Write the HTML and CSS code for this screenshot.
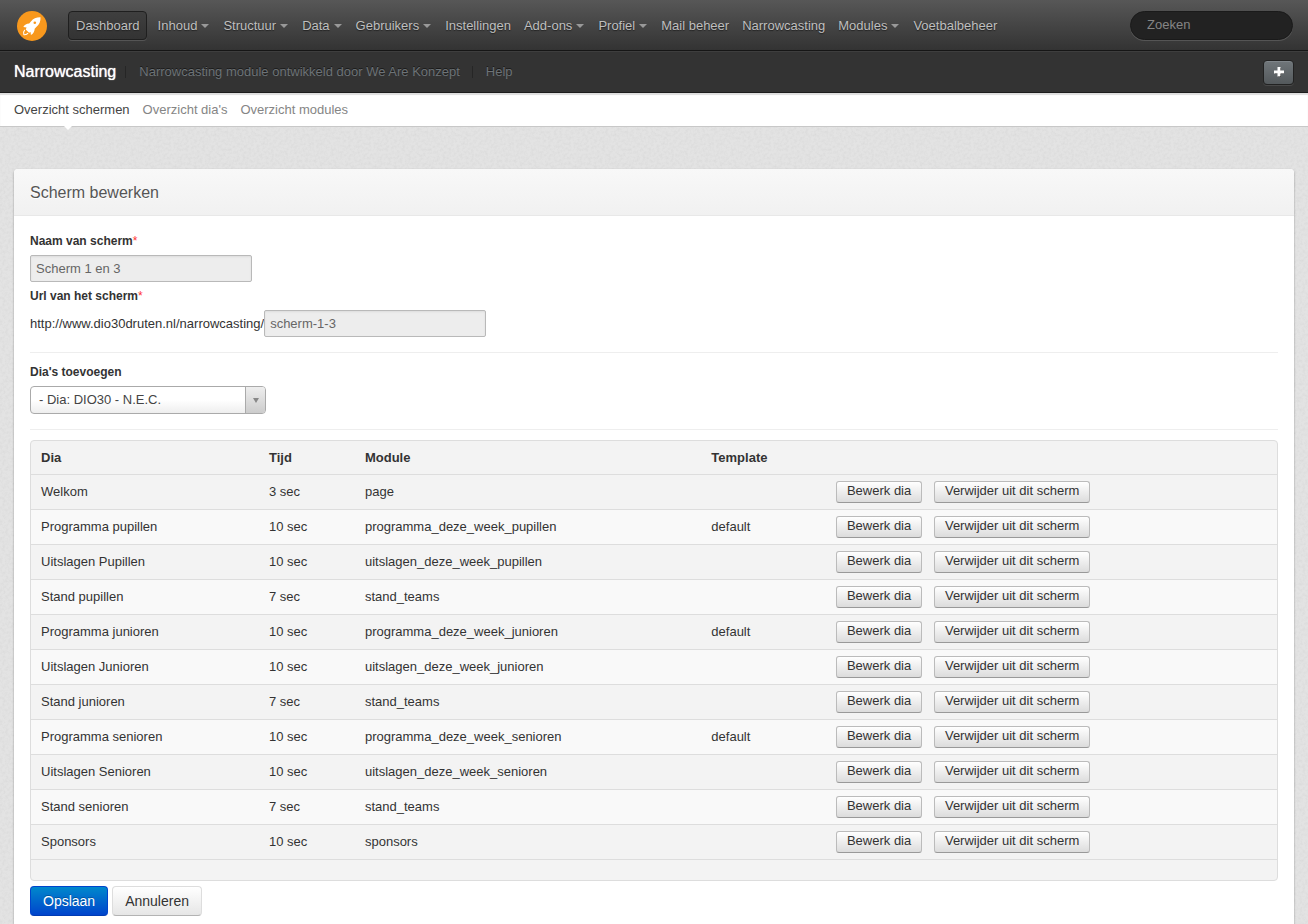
FILE: index.html
```html
<!DOCTYPE html>
<html lang="nl">
<head>
    <meta charset="UTF-8">
    <meta name="viewport" content="width=device-width, initial-scale=1.0">
    <title>Narrowcasting - Scherm bewerken</title>
    <link rel="stylesheet" href="styles.css">
</head>
<body>
    <header class="topbar">
        <a class="logo" href="#" aria-label="Home">
            <svg width="30" height="30" viewBox="0 0 30 30">
                <circle cx="15" cy="15" r="15" fill="#f8981d"/>
                <path fill="#fff" d="M23.500 6.300c-4-.1-7.200 1.300-9.600 4.100l-1.700 2c-2.600.1-4.700 1.300-5.900 3.500l3.300.5-.9 2.100 3.400 3.300 1.500-.7.300 3c2.400-1.500 3.600-3.700 3.800-6.400l1.600-1.600c3.100-2.700 4.500-5.800 4.200-9.800z"/>
                <circle cx="17.800" cy="11.700" r="1.300" fill="#f8981d"/>
                <path fill="none" stroke="#fff" stroke-width="1.100" d="M7.800 18.800c-1.300 1.400-1.600 3-.9 4.800 1.700.3 3.100-.2 4.200-1.400"/>
            </svg>
        </a>
        <nav class="menu">
            <a class="active" href="#">Dashboard</a>
            <a class="dropdown" href="#">Inhoud</a>
            <a class="dropdown" href="#">Structuur</a>
            <a class="dropdown" href="#">Data</a>
            <a class="dropdown" href="#">Gebruikers</a>
            <a href="#">Instellingen</a>
            <a class="dropdown" href="#">Add-ons</a>
            <a class="dropdown" href="#">Profiel</a>
            <a href="#">Mail beheer</a>
            <a href="#">Narrowcasting</a>
            <a class="dropdown" href="#">Modules</a>
            <a href="#">Voetbalbeheer</a>
        </nav>
        <input class="search" type="search" placeholder="Zoeken" aria-label="Zoeken">
    </header>

    <div class="subbar">
        <h1>Narrowcasting</h1>
        <span class="subbar-item">Narrowcasting module ontwikkeld door We Are Konzept</span>
        <a class="subbar-item" href="#">Help</a>
        <button class="btn-add" type="button" aria-label="Toevoegen">
            <svg width="10" height="10" viewBox="0 0 10 10"><path fill="#111" d="M4 1h3v3h3v3h-3v3h-3v-3h-3v-3h3z"/><path fill="#fff" d="M3.500 0h3v3.500h3.500v3h-3.500v3h-3v-3h-3.500v-3h3.500z"/></svg>
        </button>
    </div>

    <nav class="shortcuts">
        <a class="active" href="#">Overzicht schermen</a>
        <a href="#">Overzicht dia's</a>
        <a href="#">Overzicht modules</a>
    </nav>

    <main class="box">
        <h2 class="box-title">Scherm bewerken</h2>

        <form class="box-content">
            <label class="field-label" for="naam">Naam van scherm<span class="required">*</span></label>
            <div class="field">
                <input class="text-input" type="text" id="naam" value="Scherm 1 en 3" disabled>
            </div>
            <label class="field-label" for="url">Url van het scherm<span class="required">*</span></label>
            <div class="field">
                <span>http://www.dio30druten.nl/narrowcasting/</span>
                <input class="text-input" type="text" id="url" value="scherm-1-3" disabled>
            </div>

            <hr>

            <label class="field-label" for="dia">Dia's toevoegen</label>
            <div class="select">
                <select id="dia">
                    <option>- Dia: DIO30 - N.E.C.</option>
                </select>
            </div>

            <hr>

            <table class="table">
                <colgroup>
                    <col class="col-dia">
                    <col class="col-tijd">
                    <col class="col-module">
                    <col class="col-template">
                    <col class="col-edit">
                    <col>
                </colgroup>
                <thead>
                    <tr><th>Dia</th><th>Tijd</th><th>Module</th><th>Template</th><th></th><th></th></tr>
                </thead>
                <tbody>
                    <tr>
                        <td>Welkom</td><td>3 sec</td><td>page</td><td></td>
                        <td><button class="btn-small" type="button">Bewerk dia</button></td>
                        <td><button class="btn-small" type="button">Verwijder uit dit scherm</button></td>
                    </tr>
                    <tr>
                        <td>Programma pupillen</td><td>10 sec</td><td>programma_deze_week_pupillen</td><td>default</td>
                        <td><button class="btn-small" type="button">Bewerk dia</button></td>
                        <td><button class="btn-small" type="button">Verwijder uit dit scherm</button></td>
                    </tr>
                    <tr>
                        <td>Uitslagen Pupillen</td><td>10 sec</td><td>uitslagen_deze_week_pupillen</td><td></td>
                        <td><button class="btn-small" type="button">Bewerk dia</button></td>
                        <td><button class="btn-small" type="button">Verwijder uit dit scherm</button></td>
                    </tr>
                    <tr>
                        <td>Stand pupillen</td><td>7 sec</td><td>stand_teams</td><td></td>
                        <td><button class="btn-small" type="button">Bewerk dia</button></td>
                        <td><button class="btn-small" type="button">Verwijder uit dit scherm</button></td>
                    </tr>
                    <tr>
                        <td>Programma junioren</td><td>10 sec</td><td>programma_deze_week_junioren</td><td>default</td>
                        <td><button class="btn-small" type="button">Bewerk dia</button></td>
                        <td><button class="btn-small" type="button">Verwijder uit dit scherm</button></td>
                    </tr>
                    <tr>
                        <td>Uitslagen Junioren</td><td>10 sec</td><td>uitslagen_deze_week_junioren</td><td></td>
                        <td><button class="btn-small" type="button">Bewerk dia</button></td>
                        <td><button class="btn-small" type="button">Verwijder uit dit scherm</button></td>
                    </tr>
                    <tr>
                        <td>Stand junioren</td><td>7 sec</td><td>stand_teams</td><td></td>
                        <td><button class="btn-small" type="button">Bewerk dia</button></td>
                        <td><button class="btn-small" type="button">Verwijder uit dit scherm</button></td>
                    </tr>
                    <tr>
                        <td>Programma senioren</td><td>10 sec</td><td>programma_deze_week_senioren</td><td>default</td>
                        <td><button class="btn-small" type="button">Bewerk dia</button></td>
                        <td><button class="btn-small" type="button">Verwijder uit dit scherm</button></td>
                    </tr>
                    <tr>
                        <td>Uitslagen Senioren</td><td>10 sec</td><td>uitslagen_deze_week_senioren</td><td></td>
                        <td><button class="btn-small" type="button">Bewerk dia</button></td>
                        <td><button class="btn-small" type="button">Verwijder uit dit scherm</button></td>
                    </tr>
                    <tr>
                        <td>Stand senioren</td><td>7 sec</td><td>stand_teams</td><td></td>
                        <td><button class="btn-small" type="button">Bewerk dia</button></td>
                        <td><button class="btn-small" type="button">Verwijder uit dit scherm</button></td>
                    </tr>
                    <tr>
                        <td>Sponsors</td><td>10 sec</td><td>sponsors</td><td></td>
                        <td><button class="btn-small" type="button">Bewerk dia</button></td>
                        <td><button class="btn-small" type="button">Verwijder uit dit scherm</button></td>
                    </tr>
                </tbody>
                <tfoot>
                    <tr><td colspan="6"></td></tr>
                </tfoot>
            </table>

            <div class="actions">
                <button class="btn btn-primary" type="submit">Opslaan</button>
                <button class="btn" type="button">Annuleren</button>
            </div>
        </form>
    </main>
</body>
</html>
```
FILE: styles.css
```css
* {
    margin: 0;
    padding: 0;
    box-sizing: border-box;
}

body {
    font-family: "Liberation Sans", Arial, Helvetica, sans-serif;
    font-size: 13px;
    line-height: 20px;
    color: #333;
    background: #e3e3e3 url("data:image/svg+xml,%3Csvg xmlns='http://www.w3.org/2000/svg' width='200' height='200'%3E%3Cfilter id='n'%3E%3CfeTurbulence type='fractalNoise' baseFrequency='0.35' numOctaves='3' stitchTiles='stitch'/%3E%3CfeColorMatrix values='0 0 0 0 0.5 0 0 0 0 0.5 0 0 0 0 0.5 0.4 0 0 0 -0.15'/%3E%3C/filter%3E%3Crect width='200' height='200' filter='url(%23n)'/%3E%3C/svg%3E");
}

a {
    color: inherit;
    text-decoration: none;
}

button,
input,
select {
    font: inherit;
}

button {
    cursor: pointer;
}

/* Top navigation */
.topbar {
    display: flex;
    align-items: center;
    height: 51px;
    padding: 1px 15px 0 17px;
    background: linear-gradient(#575757, #333);
    border-bottom: 1px solid #161616;
}

.logo {
    display: flex;
    margin-right: 21px;
}

.menu {
    display: flex;
    flex: 1;
    gap: 3px;
}

.menu a {
    display: flex;
    align-items: center;
    height: 29px;
    padding: 0 5px;
    color: #bfbfbf;
    white-space: nowrap;
    text-shadow: 0 1px 1px #222;
}

.menu a.active {
    margin-right: 3px;
    padding: 0 6px 0 7px;
    background: linear-gradient(#3f3f3f, #333);
    border: 1px solid #1f1f1f;
    border-radius: 4px;
    box-shadow: 0 1px 0 #555;
}

.menu .dropdown::after {
    content: "";
    margin: 0 1px 0 4px;
    border: 4px solid transparent;
    border-top-color: #999;
    border-bottom: 0;
}

.search {
    width: 163px;
    height: 29px;
    padding: 0 16px 2px;
    color: #ccc;
    background: #222;
    border: 1px solid #1a1a1a;
    border-radius: 15px;
    box-shadow: 0 1px 0 #555;
    outline: none;
}

.search::placeholder {
    color: #858585;
}

/* Module bar */
.subbar {
    display: flex;
    align-items: center;
    height: 42px;
    padding: 0 14px;
    color: #6d7377;
    background: #333;
    border-top: 1px solid #3e3e3e;
    border-bottom: 1px solid #1c1c1c;
    text-shadow: 0 -1px 0 #1a1a1a;
}

.subbar h1 {
    margin-right: 9px;
    color: #fff;
    font-size: 16px;
    font-weight: normal;
    text-shadow: 0 0 1px #fff;
}

.subbar-item {
    display: flex;
    align-items: center;
    margin-right: 12px;
}

.subbar-item::before {
    content: "";
    width: 1px;
    height: 12px;
    margin-right: 13px;
    background: #262626;
}

.btn-add {
    display: flex;
    align-items: center;
    justify-content: center;
    width: 31px;
    height: 25px;
    margin-left: auto;
    background: linear-gradient(#70767a, #54595c);
    border: 1px solid #222;
    border-radius: 4px;
    box-shadow: 0 1px 0 #484848, inset 0 1px 0 #7f858a;
}

/* Shortcuts */
.shortcuts {
    display: flex;
    gap: 13px;
    height: 34px;
    padding: 0 14px;
    line-height: 33px;
    color: #858585;
    background: #fff;
    border-bottom: 1px solid #c8c8c8;
    box-shadow: inset 0 2px 1px #ddd;
}

.shortcuts .active {
    position: relative;
    color: #444;
}

/* arrow below the current shortcut */
.shortcuts .active::after {
    content: "";
    position: absolute;
    top: 32px;
    left: 50%;
    margin-left: -9px;
    border: 5px solid transparent;
    border-top-color: #fff;
    border-bottom: 0;
}

/* Content box */
.box {
    margin: 42px 14px 0;
    background: #fff;
    border-radius: 4px 4px 0 0;
    box-shadow: 0 1px 2px rgba(0, 0, 0, 0.4);
}

.box-title {
    height: 47px;
    padding: 0 16px;
    line-height: 48px;
    color: #555;
    font-size: 16px;
    font-weight: normal;
    background: linear-gradient(#f8f8f8, #f1f1f1);
    border-bottom: 1px solid #e8e8e8;
    border-radius: 4px 4px 0 0;
    text-shadow: 0 1px 0 #fff;
}

.box-content {
    padding: 15px 16px 8px;
}

.field-label {
    display: block;
    margin-bottom: 4px;
    font-size: 12px;
    font-weight: bold;
}

.required {
    color: #f33;
    font-weight: normal;
}

.field {
    display: flex;
    align-items: center;
    margin-bottom: 4px;
}

.text-input {
    width: 222px;
    height: 27px;
    padding: 0 5px;
    color: #666;
    background: #ededed;
    border: 1px solid #b9b9b9;
    border-radius: 2px;
    box-shadow: inset 0 1px 2px #ddd;
}

hr {
    border: 0;
    border-top: 1px solid #eee;
    margin: 15px 0 9px;
}

.select {
    position: relative;
    width: 236px;
}

.select select {
    display: block;
    width: 100%;
    height: 28px;
    padding: 0 28px 0 8px;
    color: #444;
    background: linear-gradient(#fff 50%, #eee);
    border: 1px solid #aaa;
    border-radius: 4px;
    appearance: none;
}

.select::before,
.select::after {
    content: "";
    position: absolute;
    pointer-events: none;
}

.select::before {
    top: 1px;
    right: 1px;
    bottom: 1px;
    width: 19px;
    background: linear-gradient(#eee, #ccc);
    border-left: 1px solid #aaa;
    border-radius: 0 3px 3px 0;
}

.select::after {
    top: 12px;
    right: 7px;
    border: 3px solid transparent;
    border-top: 5px solid #888;
    border-bottom: 0;
}

/* Table with slides */
.table {
    width: 100%;
    margin-top: 10px;
    table-layout: fixed;
    border: 1px solid #ddd;
    border-radius: 4px;
    border-spacing: 0;
    background: #f3f3f3;
}

.col-dia {
    width: 18.3%;
}

.col-tijd {
    width: 7.7%;
}

.col-module {
    width: 27.8%;
}

.col-template {
    width: 10%;
}

.col-edit {
    width: 98px;
}

.table th,
.table td {
    height: 35px;
    padding: 0 10px;
    text-align: left;
    border-top: 1px solid #ddd;
}

.table th {
    height: 33px;
    border-top: 0;
}

.table tbody tr:nth-child(even) {
    background: #f9f9f9;
}

.table tfoot td {
    height: 21px;
}

.btn-small {
    display: block;
    height: 22px;
    padding: 0 10px 2px;
    line-height: 18px;
    color: #333;
    white-space: nowrap;
    background: linear-gradient(#fff, #dcdcdc);
    border: 1px solid #bbb;
    border-bottom-color: #999;
    border-radius: 3px;
}

.actions {
    display: flex;
    gap: 4px;
    margin-top: 5px;
}

.btn {
    height: 30px;
    padding: 0 12px;
    color: #333;
    font-size: 14px;
    background: linear-gradient(#fff, #e6e6e6);
    border: 1px solid #ddd;
    border-bottom-color: #b3b3b3;
    border-radius: 4px;
}

.btn-primary {
    color: #fff;
    background: linear-gradient(#08c, #04c);
    border-color: #04c;
    border-bottom-color: #003bb3;
    text-shadow: 0 -1px 0 rgba(0, 0, 0, 0.25);
}
```
